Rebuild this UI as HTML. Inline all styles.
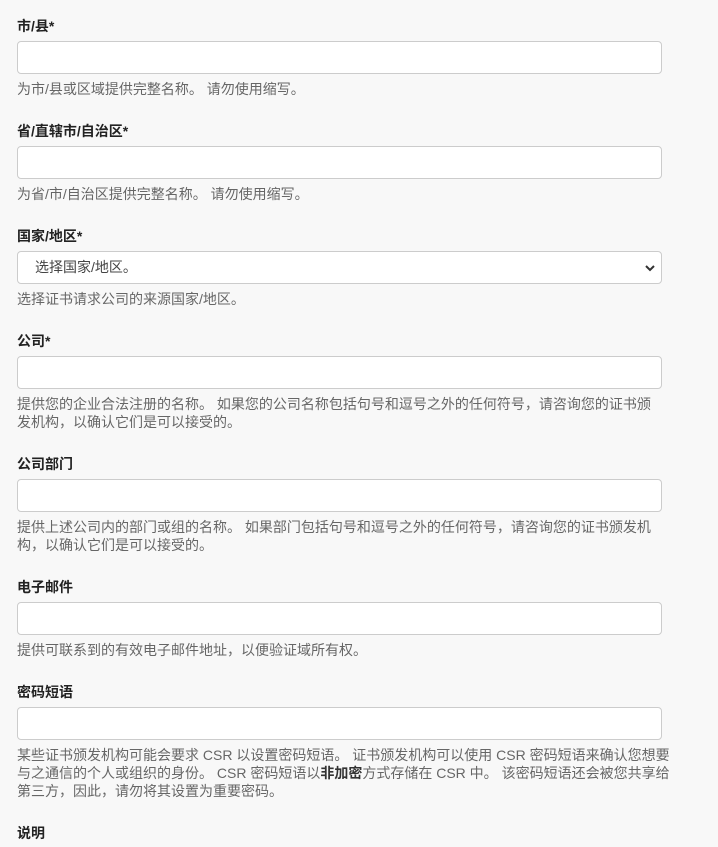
<!DOCTYPE html>
<html><head><meta charset="utf-8"><style>
html,body{margin:0;padding:0;background:#f8f8f8;width:718px;height:847px;overflow:hidden}
body{font-family:"Liberation Sans","Noto Sans CJK SC",sans-serif;font-size:14px;color:#333}
.f{margin-left:17px;width:645px}
.l{font-weight:bold;line-height:18px;height:18px;margin-top:24px;margin-bottom:6px;color:#222;font-size:14px}
.f:first-child .l{margin-top:17px}
.i{box-sizing:border-box;height:33px;background:#fff;border:1px solid #ccc;border-radius:4px;position:relative}
.s{line-height:31px;padding-left:17px;color:#444;font-size:14px}
.s svg{position:absolute;right:6px;top:12px}
.h{margin-top:6px;line-height:18px;color:#666;font-size:14px}
</style></head><body>
<div class="f"><div class="l">市/县*</div><div class="i"></div><div class="h">为市/县或区域提供完整名称。 请勿使用缩写。</div></div>
<div class="f"><div class="l">省/直辖市/自治区*</div><div class="i"></div><div class="h">为省/市/自治区提供完整名称。 请勿使用缩写。</div></div>
<div class="f"><div class="l">国家/地区*</div><div class="i s">选择国家/地区。<svg width="10" height="8" viewBox="0 0 10 8"><path d="M1 2l4 4 4-4" stroke="#333" stroke-width="2" fill="none"/></svg></div><div class="h">选择证书请求公司的来源国家/地区。</div></div>
<div class="f"><div class="l">公司*</div><div class="i"></div><div class="h">提供您的企业合法注册的名称。 如果您的公司名称包括句号和逗号之外的任何符号，请咨询您的证书颁发机构，以确认它们是可以接受的。</div></div>
<div class="f"><div class="l">公司部门</div><div class="i"></div><div class="h">提供上述公司内的部门或组的名称。 如果部门包括句号和逗号之外的任何符号，请咨询您的证书颁发机构，以确认它们是可以接受的。</div></div>
<div class="f"><div class="l">电子邮件</div><div class="i"></div><div class="h">提供可联系到的有效电子邮件地址，以便验证域所有权。</div></div>
<div class="f"><div class="l">密码短语</div><div class="i"></div><div class="h" style="width:662px">某些证书颁发机构可能会要求 CSR 以设置密码短语。 证书颁发机构可以使用 CSR 密码短语来确认您想要与之通信的个人或组织的身份。 CSR 密码短语以<b style="color:#333">非加密</b>方式存储在 CSR 中。 该密码短语还会被您共享给第三方，因此，请勿将其设置为重要密码。</div></div>
<div class="f"><div class="l">说明</div></div>
</body></html>
